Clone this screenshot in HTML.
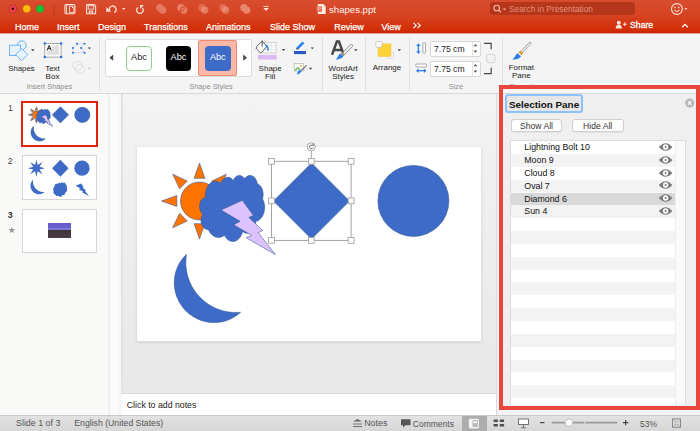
<!DOCTYPE html>
<html><head><meta charset="utf-8"><style>
html,body{margin:0;padding:0;width:700px;height:431px;overflow:hidden;background:#F3F3F3;font-family:'Liberation Sans', sans-serif}
.t{position:absolute;white-space:nowrap;font-family:'Liberation Sans', sans-serif}
svg text{font-family:'Liberation Sans', sans-serif}
</style></head><body>
<div style="position:absolute;left:0px;top:0px;width:700px;height:33px;background:linear-gradient(#D84D2F 0%,#D6421F 50%,#D22D07 92%,#C42500 100%)"></div><div style="position:absolute;left:0px;top:33px;width:700px;height:1px;background:#E2A596"></div><svg style="position:absolute;left:0px;top:0px;overflow:visible" width="60" height="20" viewBox="0 0 60 20">
<circle cx="12.8" cy="8.8" r="4" fill="#F2444F" stroke="#B5281F" stroke-width="0.7"/>
<circle cx="12.8" cy="8.8" r="1.3" fill="#2a0505"/>
<circle cx="26.7" cy="8.8" r="4" fill="#FFBE0B" stroke="#C0541A" stroke-width="0.5"/>
<circle cx="40" cy="8.8" r="4" fill="#0AC834" stroke="#A04A1A" stroke-width="0.5"/>
<line x1="54" y1="5" x2="54" y2="17" stroke="#B93A20" stroke-width="1"/>
</svg><svg style="position:absolute;left:0px;top:0px;overflow:visible" width="280" height="20" viewBox="0 0 280 20">
<rect x="64.9" y="4.6" width="10" height="9.2" rx="1.2" fill="none" stroke="#F9E0D8" stroke-width="1.1"/>
<rect x="66" y="5.3" width="0.9" height="8" fill="#F9E0D8"/>
<path d="M69.5 6.1 h2.8 l1.6 1.6 v4.9 h-4.4z" fill="none" stroke="#F9E0D8" stroke-width="0.9"/>
<path d="M72 5.9 l2 2 h-2z" fill="#F9E0D8"/>
<path d="M86.6 4.6 h7.6 l1.4 1.4 v7.8 h-9z" fill="none" stroke="#F9E0D8" stroke-width="1.1" stroke-linejoin="round"/>
<rect x="88.2" y="5.8" width="5.5" height="3.3" fill="none" stroke="#F9E0D8" stroke-width="0.9"/>
<path d="M88.8 13.6 v-3 h4.4 v3" fill="#F9E0D8"/>
<rect x="90.4" y="11.6" width="1.2" height="1.6" fill="#D04226"/>
<path d="M109.6 10.3 A3.3 3.3 0 1 1 114.1 12.4" fill="none" stroke="#F9E0D8" stroke-width="1.3"/>
<path d="M106.3 6.9 V11.8 H111.2z" fill="#F9E0D8"/>
<path d="M122.1 8 h3.4 l-1.7 1.9z" fill="#F9E0D8"/>
<path d="M137.9 7.4 A3.3 3.3 0 1 0 142.4 7.9" fill="none" stroke="#F9E0D8" stroke-width="1.3"/>
<path d="M140 4.9 H143.9 L140 8.9z" fill="#F9E0D8"/>
</svg><svg style="position:absolute;left:0px;top:0px;overflow:visible" width="280" height="20" viewBox="0 0 280 20"><g fill="#F4AE9B" opacity="0.5"><path d="M156.30,7.70 a3.7,3.7 0 1 0 7.4,0 a3.7,3.7 0 1 0 -7.4,0zM159.00,10.10 a3.7,3.7 0 1 0 7.4,0 a3.7,3.7 0 1 0 -7.4,0z" fill-rule="nonzero"/></g></svg><svg style="position:absolute;left:0px;top:0px;overflow:visible" width="280" height="20" viewBox="0 0 280 20"><g fill="#F4AE9B" opacity="0.55"><path d="M177.30,7.70 a3.7,3.7 0 1 0 7.4,0 a3.7,3.7 0 1 0 -7.4,0zM180.00,10.10 a3.7,3.7 0 1 0 7.4,0 a3.7,3.7 0 1 0 -7.4,0zM181.10,8.90 a1.3,1.3 0 1 0 2.6,0 a1.3,1.3 0 1 0 -2.6,0z" fill-rule="evenodd"/></g></svg><svg style="position:absolute;left:0px;top:0px;overflow:visible" width="280" height="20" viewBox="0 0 280 20"><g fill="#F4AE9B"><path d="M198.30,7.70 a3.7,3.7 0 1 0 7.4,0 a3.7,3.7 0 1 0 -7.4,0z" opacity="0.3"/><path d="M201.00,10.10 a3.7,3.7 0 1 0 7.4,0 a3.7,3.7 0 1 0 -7.4,0z" opacity="0.5"/></g></svg><svg style="position:absolute;left:0px;top:0px;overflow:visible" width="280" height="20" viewBox="0 0 280 20"><g fill="#F4AE9B"><path d="M219.30,7.70 a3.7,3.7 0 1 0 7.4,0 a3.7,3.7 0 1 0 -7.4,0z" opacity="0.35"/><path d="M222.00,10.10 a3.7,3.7 0 1 0 7.4,0 a3.7,3.7 0 1 0 -7.4,0z" opacity="0.5"/></g></svg><svg style="position:absolute;left:0px;top:0px;overflow:visible" width="280" height="20" viewBox="0 0 280 20"><g fill="#F4AE9B" opacity="0.62"><path d="M240.30,7.70 a3.7,3.7 0 1 0 7.4,0 a3.7,3.7 0 1 0 -7.4,0zM243.00,10.10 a3.7,3.7 0 1 0 7.4,0 a3.7,3.7 0 1 0 -7.4,0z" fill-rule="nonzero"/></g></svg><svg style="position:absolute;left:0px;top:0px;overflow:visible" width="280" height="20" viewBox="0 0 280 20"><rect x="263.4" y="5.9" width="5.3" height="1" fill="#F9E0D8"/><path d="M263.3 8 h5.5 l-2.75 3z" fill="#F9E0D8"/></svg><svg style="position:absolute;left:0px;top:0px;overflow:visible" width="330" height="20" viewBox="0 0 330 20"><path d="M317.8 4 h5.5 l2.4 2.4 v7.5 h-7.9z" fill="#F7EDE3"/>
<path d="M323.3 4 v2.4 h2.4z" fill="#D9D0C8"/>
<rect x="316.3" y="6.2" width="5.7" height="5.5" fill="#EA6A50"/>
<path d="M318.2 10.6 v-3.4 h1.3 a1 1 0 0 1 0 2 h-1.3" fill="none" stroke="#FFD9CF" stroke-width="0.7"/></svg><div class="t" style="left:329px;top:0.07px;font-size:9.6px;line-height:19.2px;color:#FFF3EE;font-weight:400;">shapes.ppt</div><div style="position:absolute;left:490px;top:2.1px;width:145px;height:13.2px;background:#B6361B;border-radius:3px"></div><svg style="position:absolute;left:490px;top:0px;overflow:visible" width="20" height="20" viewBox="0 0 20 20"><circle cx="6.7" cy="8" r="2.8" fill="none" stroke="#F2B8A8" stroke-width="1.1"/><line x1="8.7" y1="10.1" x2="10.7" y2="12.2" stroke="#F2B8A8" stroke-width="1.3"/><path d="M12.7 8.4 h3.4 l-1.7 1.9z" fill="#F2B8A8"/></svg><div class="t" style="left:509px;top:1.22px;font-size:8.3px;line-height:16.6px;color:#E2927F;font-weight:400;">Search in Presentation</div><svg style="position:absolute;left:660px;top:0px;overflow:visible" width="40" height="20" viewBox="0 0 40 20"><circle cx="16.9" cy="9" r="5.4" fill="none" stroke="#FBE7E1" stroke-width="1.1"/><circle cx="15" cy="7.6" r="0.8" fill="#FBE7E1"/><circle cx="18.8" cy="7.6" r="0.8" fill="#FBE7E1"/><path d="M14.2 10.2 q2.7 2.6 5.4 0" fill="none" stroke="#FBE7E1" stroke-width="1"/><path d="M24.3 8.2 h3.2 l-1.6 1.9z" fill="#FBE7E1"/></svg><div class="t" style="left:15px;top:18.08px;font-size:9px;line-height:18px;color:#FFFFFF;font-weight:400;-webkit-text-stroke:0.25px #fff;">Home</div><div class="t" style="left:57px;top:18.08px;font-size:9px;line-height:18px;color:#FFFFFF;font-weight:400;-webkit-text-stroke:0.25px #fff;">Insert</div><div class="t" style="left:98px;top:18.08px;font-size:9px;line-height:18px;color:#FFFFFF;font-weight:400;-webkit-text-stroke:0.25px #fff;">Design</div><div class="t" style="left:144px;top:18.08px;font-size:9px;line-height:18px;color:#FFFFFF;font-weight:400;-webkit-text-stroke:0.25px #fff;">Transitions</div><div class="t" style="left:206px;top:18.08px;font-size:9px;line-height:18px;color:#FFFFFF;font-weight:400;-webkit-text-stroke:0.25px #fff;">Animations</div><div class="t" style="left:270px;top:18.08px;font-size:9px;line-height:18px;color:#FFFFFF;font-weight:400;-webkit-text-stroke:0.25px #fff;">Slide Show</div><div class="t" style="left:334.3px;top:18.08px;font-size:9px;line-height:18px;color:#FFFFFF;font-weight:400;-webkit-text-stroke:0.25px #fff;">Review</div><div class="t" style="left:381.4px;top:18.08px;font-size:9px;line-height:18px;color:#FFFFFF;font-weight:400;-webkit-text-stroke:0.25px #fff;">View</div><svg style="position:absolute;left:400px;top:15px;overflow:visible" width="30" height="20" viewBox="0 0 30 20"><path d="M13.5 7.8 l2.8 2.6 l-2.8 2.6 M17.5 7.8 l2.8 2.6 l-2.8 2.6" fill="none" stroke="#fff" stroke-width="1.1"/></svg><svg style="position:absolute;left:610px;top:15px;overflow:visible" width="90" height="20" viewBox="0 0 90 20"><circle cx="8.8" cy="7.7" r="2" fill="#F8E4DE"/><path d="M5.6 13.6 q0.2 -3.8 3.2 -3.8 q3 0 3.2 3.8z" fill="#F8E4DE"/>
<path d="M12.9 9.2 h3.8 M14.8 7.3 v3.8" stroke="#F8E4DE" stroke-width="1.1"/>
<path d="M72.2 12.2 l2.8 -2.8 l2.8 2.8" fill="none" stroke="#fff" stroke-width="1.3"/></svg><div class="t" style="left:630px;top:16.69px;font-size:8.7px;line-height:17.4px;color:#FFFFFF;font-weight:400;-webkit-text-stroke:0.3px #fff;">Share</div><div style="position:absolute;left:0px;top:34px;width:700px;height:59px;background:#F4F4F4"></div><div style="position:absolute;left:0px;top:93px;width:700px;height:1px;background:#D9D9D9"></div><div style="position:absolute;left:99px;top:37px;width:1px;height:54px;background:#E0E0E0"></div><div style="position:absolute;left:322px;top:37px;width:1px;height:54px;background:#E0E0E0"></div><div style="position:absolute;left:365px;top:37px;width:1px;height:54px;background:#E0E0E0"></div><div style="position:absolute;left:409px;top:37px;width:1px;height:54px;background:#E0E0E0"></div><div style="position:absolute;left:502px;top:37px;width:1px;height:54px;background:#E0E0E0"></div><svg style="position:absolute;left:0px;top:0px;overflow:visible" width="700" height="100" viewBox="0 0 700 100">
<g stroke="#5AACF5" stroke-width="0.9" fill="#EAF4FD">
<circle cx="21.7" cy="45.3" r="4.5"/>
<rect x="9.6" y="45.2" width="11" height="10.2"/>
<path d="M21.7 48.6 l6 6 l-6 6 l-6 -6z"/>
</g>
<path d="M31 49.2 h3.6 l-1.8 2z" fill="#444"/>
<rect x="44.8" y="43.4" width="16.3" height="13.7" fill="#FAFAFA" stroke="#8a8a8a" stroke-width="0.7"/>
<rect x="47" y="45.3" width="12" height="9.6" fill="#E4E4E4"/>
<path d="M51.5 47.3 h7.5 M51.5 49.3 h7.5 M47 51.3 h12 M47 53.3 h12" stroke="#D6D6D6" stroke-width="0.5"/>
<rect x="46.6" y="45.1" width="5.2" height="5.6" fill="#FAFAFA"/>
<path d="M47.1 50.4 l2.1-5 l2.1 5 M47.9 48.7 h2.6" fill="none" stroke="#222" stroke-width="1"/>
<g fill="#1A73E8"><circle cx="44.8" cy="43.4" r="1.25"/><circle cx="61.1" cy="43.4" r="1.25"/><circle cx="44.8" cy="57.1" r="1.25"/><circle cx="61.1" cy="57.1" r="1.25"/></g>
<path d="M77.1 43.7 h7.4 l-3.3 4.3 l3.3 4.8 h-11.6 v-4.8z" fill="none" stroke="#CFCFCF" stroke-width="0.8"/>
<g fill="#1A73E8"><circle cx="77.1" cy="43.7" r="1.05"/><circle cx="84.5" cy="43.7" r="1.05"/><circle cx="81.2" cy="48" r="1.05"/><circle cx="84.5" cy="52.8" r="1.05"/><circle cx="72.9" cy="52.8" r="1.05"/><circle cx="72.9" cy="48" r="1.05"/></g>
<path d="M87.7 47.4 h3.4 l-1.7 1.9z" fill="#444"/>
<g fill="none" stroke="#DADADA" stroke-width="0.8"><circle cx="77.4" cy="66" r="4.6"/><circle cx="80" cy="69" r="4.6"/></g>
<path d="M87.7 67.8 h3.4 l-1.7 1.9z" fill="#C4C4C4"/>
</svg><div class="t" style="left:8.2px;top:60.90px;font-size:7.8px;line-height:15.6px;color:#1c1c1c;font-weight:400;">Shapes</div><div class="t" style="left:-147.5px;width:400px;text-align:center;top:60.63px;font-size:8px;line-height:16px;color:#1c1c1c;font-weight:400;">Text</div><div class="t" style="left:-147.5px;width:400px;text-align:center;top:68.53px;font-size:8px;line-height:16px;color:#1c1c1c;font-weight:400;">Box</div><div class="t" style="left:-150.5px;width:400px;text-align:center;top:79.54px;font-size:7.4px;line-height:14.8px;color:#8E8E8E;font-weight:400;">Insert Shapes</div><div style="position:absolute;left:105px;top:39px;width:146px;height:37px;background:#fff;border:1px solid #DCDCDC;border-radius:2px;box-sizing:border-box;width:147px;height:38px"></div><svg style="position:absolute;left:0px;top:0px;overflow:visible" width="700" height="100" viewBox="0 0 700 100"><path d="M113.2 54.6 v6.2 l-3.9 -3.1z" fill="#4A4A4A"/><path d="M243.2 54.6 v6.2 l3.9 -3.1z" fill="#4A4A4A"/></svg><div style="position:absolute;left:126.3px;top:45.6px;width:25.6px;height:25.2px;background:#fff;border:1px solid #8FD18A;border-radius:4px;box-sizing:border-box"></div><div style="position:absolute;left:165.6px;top:45.6px;width:25.8px;height:25.4px;background:#000;border-radius:4px"></div><div style="position:absolute;left:198.3px;top:39.9px;width:38.7px;height:36.5px;background:#F9B7A6;border:1px solid #EE8A72;box-sizing:border-box;border-radius:2px"></div><div style="position:absolute;left:205px;top:45.6px;width:25.7px;height:25.6px;background:#3E6BC8;border-radius:4px"></div><div class="t" style="left:-61px;width:400px;text-align:center;top:48.01px;font-size:9.2px;line-height:18.4px;color:#222;font-weight:400;">Abc</div><div class="t" style="left:-21.5px;width:400px;text-align:center;top:48.01px;font-size:9.2px;line-height:18.4px;color:#fff;font-weight:400;">Abc</div><div class="t" style="left:17.80000000000001px;width:400px;text-align:center;top:48.01px;font-size:9.2px;line-height:18.4px;color:#fff;font-weight:400;">Abc</div><div class="t" style="left:11px;width:400px;text-align:center;top:79.54px;font-size:7.4px;line-height:14.8px;color:#8E8E8E;font-weight:400;">Shape Styles</div><svg style="position:absolute;left:0px;top:0px;overflow:visible" width="700" height="100" viewBox="0 0 700 100">
<rect x="263" y="42.5" width="13" height="10.5" fill="#FBFBFB" stroke="#B9B9B9" stroke-width="0.6"/>
<path d="M263 46 h13 M263 49.5 h13 M267.3 42.5 v10.5 M271.6 42.5 v10.5" stroke="#DADADA" stroke-width="0.5"/>
<path d="M256.6 46.6 l4.6 -4.6 q0.8 -0.8 1.6 0 l4.2 4.2 l-5.4 6.2 q-0.8 0.8 -1.6 0 l-3.4 -3.4 q-0.8 -0.8 0 -1.6z" fill="#fff" stroke="#444" stroke-width="0.9" stroke-linejoin="round"/>
<path d="M262.2 46.8 l0 -6.4" stroke="#444" stroke-width="0.9"/>
<path d="M265.2 45 q3.6 1.4 2.6 5.6" fill="none" stroke="#2F80E6" stroke-width="1.5"/>
<rect x="258" y="55" width="18.6" height="4.5" fill="#DDB8F5"/>
<path d="M281.8 49 h3.4 l-1.7 1.9z" fill="#444"/>
<rect x="294" y="51" width="12" height="3.1" fill="#2A5BC5"/>
<path d="M296.3 49.6 l0.6 -2.6 l5.6 -5.6 l1.9 1.9 l-5.6 5.6z" fill="#2F86E8"/>
<path d="M296.3 49.6 l0.6 -2.6 l2 2z" fill="#555"/>
<path d="M310.6 47.4 h3.4 l-1.7 1.9z" fill="#444"/>
<rect x="294.2" y="63.3" width="9.3" height="7.7" fill="#FBFBFB" stroke="#A8A8A8" stroke-width="0.6"/>
<circle cx="301" cy="65.8" r="1.1" fill="#F5C33B"/>
<path d="M295 70.5 l2.8 -2.8 l2.2 2" fill="none" stroke="#66C05C" stroke-width="1.3"/>
<path d="M306.3 65.6 l-4.8 4.6" stroke="#777" stroke-width="1.3" stroke-linecap="round"/>
<path d="M297 74.6 q0.2 -2.8 2.6 -5 l2 2 q-2 2.6 -4.6 3z" fill="#2F80E6"/>
<path d="M308.8 67.8 h3.4 l-1.7 1.9z" fill="#444"/>
<path d="M332 54.8 l4.9 -13.4 h2 l4.9 13.4 M334.2 50 h7.6" fill="none" stroke="#474747" stroke-width="2.5"/>
<path d="M351.4 45.6 l-8.4 8.8" stroke="#8A8A8A" stroke-width="3.2" stroke-linecap="round"/>
<path d="M351.4 45.6 l-8.4 8.8" stroke="#F7F7F7" stroke-width="1.8" stroke-linecap="round"/>
<path d="M340.6 53 l2.2 -1 l1.6 1.6 l-1 2.4 z" fill="#A58A7A"/>
<path d="M340.2 53.6 l3.2 3 q-2.4 3 -8.1 2.8 q1.9 -1.1 2.7 -3 q0.9 -2.2 2.2 -2.8z" fill="#2F7FE0"/>
<path d="M354.1 49.3 h3.4 l-1.7 1.9z" fill="#444"/>
<rect x="386.7" y="51.9" width="6.9" height="6.2" rx="1" fill="#fff" stroke="#BDBDBD" stroke-width="0.6"/>
<rect x="378.1" y="43.9" width="12.9" height="12.5" fill="#FFD43B" stroke="#F3B92A" stroke-width="0.5"/>
<rect x="375.9" y="41.6" width="6.2" height="5.7" rx="1" fill="#fff" stroke="#A8A8A8" stroke-width="0.6"/>
<path d="M397.6 49.3 h3.4 l-1.7 1.9z" fill="#444"/>
</svg><div class="t" style="left:70.19999999999999px;width:400px;text-align:center;top:60.63px;font-size:8px;line-height:16px;color:#1c1c1c;font-weight:400;">Shape</div><div class="t" style="left:70.19999999999999px;width:400px;text-align:center;top:68.53px;font-size:8px;line-height:16px;color:#1c1c1c;font-weight:400;">Fill</div><div class="t" style="left:143.2px;width:400px;text-align:center;top:60.63px;font-size:8px;line-height:16px;color:#1c1c1c;font-weight:400;">WordArt</div><div class="t" style="left:143.2px;width:400px;text-align:center;top:68.53px;font-size:8px;line-height:16px;color:#1c1c1c;font-weight:400;">Styles</div><div class="t" style="left:187px;width:400px;text-align:center;top:59.93px;font-size:8px;line-height:16px;color:#1c1c1c;font-weight:400;">Arrange</div><svg style="position:absolute;left:0px;top:0px;overflow:visible" width="700" height="100" viewBox="0 0 700 100">
<path d="M418.4 44.8 v7.6" stroke="#2F80E6" stroke-width="1.3"/>
<path d="M416.2 45.9 l2.2 -2.6 l2.2 2.6z M416.2 51.3 l2.2 2.6 l2.2 -2.6z" fill="#2F80E6"/>
<rect x="422.9" y="42.8" width="2.6" height="10.2" rx="0.5" fill="#fff" stroke="#8A8A8A" stroke-width="0.7"/>
<rect x="415.9" y="64" width="10.6" height="3" rx="0.5" fill="#fff" stroke="#8A8A8A" stroke-width="0.7"/>
<path d="M417.5 70.7 h7.5" stroke="#2F80E6" stroke-width="1.3"/>
<path d="M418.6 68.5 l-2.6 2.2 l2.6 2.2z M423.9 68.5 l2.6 2.2 l-2.6 2.2z" fill="#2F80E6"/>
<path d="M484 43.4 h7.2 v5.8 M484 73.6 h7.2 v-5.8" fill="none" stroke="#484848" stroke-width="1.2"/>
<rect x="486.6" y="54.4" width="8.5" height="8.3" rx="2" fill="#F1F1F1" stroke="#C6C6C6" stroke-width="0.7"/>
</svg><div style="position:absolute;left:430px;top:40.7px;width:51.4px;height:16px;background:#fff;border:1px solid #D6D6D6;border-radius:2px;box-sizing:border-box"></div><div style="position:absolute;left:430px;top:60.8px;width:51.4px;height:16px;background:#fff;border:1px solid #D6D6D6;border-radius:2px;box-sizing:border-box"></div><div style="position:absolute;left:471.5px;top:42px;width:1px;height:13.5px;background:#E4E4E4"></div><div style="position:absolute;left:471.5px;top:62px;width:1px;height:13.5px;background:#E4E4E4"></div><svg style="position:absolute;left:470px;top:33px;overflow:visible" width="14" height="60" viewBox="0 0 14 60"><path d="M3.4 13.2 l2-2.2 l2 2.2z M3.4 17.6 l2 2.2 l2-2.2z M3.4 33.2 l2-2.2 l2 2.2z M3.4 37.6 l2 2.2 l2-2.2z" fill="#555"/></svg><div class="t" style="left:434px;top:40.62px;font-size:8.6px;line-height:17.2px;color:#222;font-weight:400;">7.75 cm</div><div class="t" style="left:434px;top:60.72px;font-size:8.6px;line-height:17.2px;color:#222;font-weight:400;">7.75 cm</div><div class="t" style="left:256px;width:400px;text-align:center;top:79.54px;font-size:7.4px;line-height:14.8px;color:#8E8E8E;font-weight:400;">Size</div><svg style="position:absolute;left:0px;top:0px;overflow:visible" width="700" height="100" viewBox="0 0 700 100">
<path d="M530.2 43.2 l-8.4 8.6" stroke="#8E8E8E" stroke-width="2.6" stroke-linecap="round"/>
<path d="M530.2 43.2 l-8.4 8.6" stroke="#F4F4F4" stroke-width="1.4" stroke-linecap="round"/>
<path d="M518.3 52.2 l2.4 -1.8 l2.6 2.6 l-1.8 2.4 z" fill="#D9A441"/>
<path d="M517.6 53.2 l3.4 3.4 q-2.6 3.4 -8.8 2.8 q2 -1.2 3 -3.4 q0.9 -2.2 2.4 -2.8z" fill="#2F7FE0"/>
</svg><div class="t" style="left:321.29999999999995px;width:400px;text-align:center;top:60.43px;font-size:8px;line-height:16px;color:#1c1c1c;font-weight:400;">Format</div><div class="t" style="left:321.29999999999995px;width:400px;text-align:center;top:68.33px;font-size:8px;line-height:16px;color:#1c1c1c;font-weight:400;">Pane</div><div class="t" style="left:321.29999999999995px;width:400px;text-align:center;top:80.04px;font-size:7.4px;line-height:14.8px;color:#8E8E8E;font-weight:400;">Format</div><div style="position:absolute;left:0px;top:94px;width:122px;height:321px;background:#F9F9F8"></div><div style="position:absolute;left:108px;top:94px;width:3px;height:321px;background:linear-gradient(90deg,#F2F2F2,#EDEDED 50%,#F7F7F7)"></div><div style="position:absolute;left:110px;top:94px;width:8px;height:321px;background:#FBFBFB"></div><div style="position:absolute;left:118px;top:94px;width:3px;height:321px;background:#F6F6F6"></div><div style="position:absolute;left:121px;top:94px;width:2px;height:300px;background:#E2E2E2"></div><div class="t" style="left:7.9px;top:99.55px;font-size:8.8px;line-height:17.6px;color:#444;font-weight:400;">1</div><div style="position:absolute;left:20.7px;top:100.8px;width:77.8px;height:46.2px;border:2px solid #E0250D;box-sizing:border-box;background:#fff"></div><svg style="position:absolute;left:22.7px;top:102.8px;overflow:visible" width="73.8" height="42.2" viewBox="137 147 344 194"><path d="M199.50,163.00 L194.05,178.33 L204.95,178.33Z M226.37,174.13 L211.67,181.12 L219.38,188.83Z M237.50,201.00 L222.17,195.55 L222.17,206.45Z M226.37,227.87 L219.38,213.17 L211.67,220.88Z M199.50,239.00 L204.95,223.67 L194.05,223.67Z M172.63,227.87 L187.33,220.88 L179.62,213.17Z M161.50,201.00 L176.83,206.45 L176.83,195.55Z M172.63,174.13 L179.62,188.83 L187.33,181.12Z " fill="#FF7300" stroke="#2F528F" stroke-width="2.4" stroke-linejoin="round"/><ellipse cx="199.5" cy="201.0" rx="19.0" ry="19.0" fill="#FF7300" stroke="#2F528F" stroke-width="2.4"/><path d="M311.5,163 L349.5,201 L311.5,239 L273.5,201Z" fill="#3F6BC8" stroke="#2F528F" stroke-width="2.4"/><circle cx="413.4" cy="200.9" r="35.5" fill="#3F6BC8" stroke="#2F528F" stroke-width="2.4"/><path d="M205.47,197.15 L205.38,195.59 L205.42,194.02 L205.58,192.47 L205.87,190.95 L206.27,189.49 L206.80,188.10 L207.43,186.79 L208.17,185.60 L208.99,184.52 L209.90,183.58 L210.88,182.78 L211.91,182.14 L213.00,181.67 L214.11,181.36 L215.24,181.23 L216.38,181.27 L217.50,181.49 L218.60,181.88 L219.66,182.43 L220.67,183.15 L221.23,181.89 L221.91,180.76 L222.69,179.75 L223.56,178.90 L224.50,178.21 L225.50,177.70 L226.54,177.38 L227.60,177.26 L228.67,177.32 L229.71,177.59 L230.73,178.04 L231.69,178.68 L232.58,179.48 L233.39,180.44 L233.81,179.45 L234.31,178.54 L234.90,177.72 L235.55,177.01 L236.26,176.42 L237.03,175.96 L237.82,175.64 L238.65,175.46 L239.48,175.42 L240.31,175.53 L241.12,175.78 L241.90,176.18 L242.64,176.70 L243.32,177.36 L243.94,178.12 L244.49,178.99 L245.09,178.12 L245.76,177.36 L246.49,176.72 L247.27,176.19 L248.09,175.80 L248.94,175.55 L249.81,175.44 L250.68,175.46 L251.54,175.64 L252.37,175.95 L253.18,176.39 L253.94,176.97 L254.65,177.66 L255.29,178.47 L255.86,179.37 L256.35,180.37 L256.75,181.43 L257.05,182.55 L257.25,183.72 L257.98,184.04 L258.68,184.46 L259.35,184.97 L259.98,185.57 L260.56,186.24 L261.10,186.99 L261.58,187.80 L262.01,188.68 L262.37,189.61 L262.67,190.58 L262.90,191.58 L263.06,192.62 L263.15,193.66 L263.17,194.72 L263.11,195.77 L262.99,196.81 L262.79,197.83 L262.52,198.82 L263.10,199.97 L263.59,201.19 L263.99,202.47 L264.29,203.80 L264.50,205.17 L264.61,206.56 L264.62,207.96 L264.53,209.35 L264.34,210.72 L264.06,212.06 L263.67,213.35 L263.20,214.59 L262.64,215.75 L262.00,216.84 L261.29,217.83 L260.51,218.71 L259.67,219.49 L258.78,220.15 L257.84,220.68 L256.87,221.08 L255.88,221.34 L255.82,222.68 L255.65,224.00 L255.37,225.29 L255.00,226.52 L254.52,227.69 L253.96,228.78 L253.31,229.78 L252.58,230.67 L251.79,231.44 L250.93,232.09 L250.04,232.60 L249.10,232.97 L248.15,233.19 L247.18,233.27 L246.21,233.19 L245.25,232.97 L244.32,232.60 L243.42,232.09 L242.57,231.44 L242.15,233.01 L241.60,234.50 L240.93,235.89 L240.14,237.16 L239.25,238.29 L238.27,239.26 L237.21,240.07 L236.10,240.70 L234.93,241.14 L233.74,241.39 L232.53,241.43 L231.33,241.28 L230.15,240.94 L229.01,240.40 L227.92,239.68 L226.90,238.78 L225.96,237.72 L225.13,236.52 L224.40,235.19 L223.03,236.16 L221.58,236.88 L220.07,237.32 L218.54,237.49 L217.00,237.37 L215.49,236.97 L214.03,236.30 L212.64,235.36 L211.36,234.18 L210.20,232.77 L209.19,231.17 L208.33,229.39 L207.67,229.45 L207.00,229.42 L206.34,229.29 L205.69,229.07 L205.07,228.77 L204.46,228.37 L203.89,227.90 L203.36,227.35 L202.87,226.72 L202.43,226.03 L202.04,225.28 L201.71,224.49 L201.44,223.65 L201.24,222.77 L201.10,221.87 L201.02,220.96 L201.01,220.04 L201.08,219.13 L201.20,218.23 L201.40,217.35 L201.65,216.50 L201.97,215.69 L202.35,214.93 L202.78,214.23 L202.23,213.73 L201.72,213.16 L201.26,212.52 L200.84,211.82 L200.47,211.06 L200.17,210.25 L199.92,209.41 L199.73,208.54 L199.61,207.64 L199.55,206.73 L199.56,205.82 L199.63,204.92 L199.77,204.03 L199.97,203.16 L200.24,202.33 L200.56,201.53 L200.94,200.79 L201.37,200.10 L201.85,199.48 L202.37,198.92 L202.93,198.44 L203.51,198.04 L204.13,197.73 L204.77,197.50 L205.41,197.36Z" fill="#3F6BC8" stroke="#2F528F" stroke-width="2.4"/><path d="M240.61,312.21 L239.08,313.56 L237.49,314.84 L235.82,316.02 L234.10,317.12 L232.32,318.12 L230.49,319.03 L228.61,319.84 L226.69,320.55 L224.73,321.16 L222.75,321.66 L220.74,322.06 L218.71,322.35 L216.66,322.54 L214.61,322.61 L212.55,322.58 L210.50,322.45 L208.45,322.20 L206.42,321.85 L204.41,321.39 L202.42,320.83 L200.46,320.16 L198.54,319.40 L196.66,318.53 L194.83,317.57 L193.05,316.52 L191.32,315.37 L189.66,314.14 L188.06,312.82 L186.53,311.42 L185.08,309.94 L183.70,308.39 L182.40,306.77 L181.19,305.09 L180.07,303.35 L179.04,301.55 L178.11,299.70 L177.27,297.81 L176.53,295.88 L175.90,293.91 L175.36,291.92 L174.93,289.90 L174.61,287.86 L174.39,285.81 L174.29,283.75 L174.28,281.69 L174.39,279.64 L174.60,277.59 L174.93,275.57 L175.35,273.56 L175.88,271.58 L176.52,269.63 L177.25,267.72 L178.09,265.85 L179.02,264.03 L180.05,262.26 L181.17,260.55 L182.37,258.90 L183.67,257.32 L185.04,255.81 L186.50,254.38 L186.17,256.63 L185.95,258.89 L185.83,261.17 L185.82,263.45 L185.91,265.72 L186.11,268.00 L186.41,270.26 L186.82,272.51 L187.33,274.73 L187.95,276.94 L188.66,279.11 L189.48,281.25 L190.39,283.35 L191.40,285.41 L192.50,287.42 L193.69,289.38 L194.97,291.29 L196.34,293.13 L197.79,294.91 L199.31,296.62 L200.92,298.26 L202.60,299.82 L204.35,301.31 L206.16,302.71 L208.04,304.03 L209.97,305.26 L211.96,306.41 L214.00,307.45 L216.08,308.41 L218.20,309.27 L220.36,310.02 L222.55,310.68 L224.76,311.24 L227.00,311.69 L229.25,312.04 L231.52,312.29 L233.79,312.42 L236.07,312.46 L238.34,312.39 L240.61,312.21Z" fill="#3F6BC8" stroke="#2F528F" stroke-width="2.4"/><path d="M242.34,200.30 L253.39,215.58 L248.83,217.39 L262.75,230.48 L258.19,232.67 L275.40,254.60 L246.22,237.79 L251.78,235.46 L233.65,224.70 L240.15,221.37 L221.00,210.08Z" fill="#DCC3FF" stroke="#2F528F" stroke-width="2.4" stroke-linejoin="miter"/></svg><div class="t" style="left:7.7px;top:153.15px;font-size:8.8px;line-height:17.6px;color:#444;font-weight:400;">2</div><div style="position:absolute;left:22px;top:155px;width:75px;height:44.6px;border:1px solid #D6D6D6;box-sizing:border-box;background:#fff"></div><svg style="position:absolute;left:23px;top:156px;overflow:visible" width="73" height="42.6" viewBox="137 147 344 194"><path d="M200.00,160.00 L206.12,186.22 L228.99,172.01 L214.78,194.88 L241.00,201.00 L214.78,207.12 L228.99,229.99 L206.12,215.78 L200.00,242.00 L193.88,215.78 L171.01,229.99 L185.22,207.12 L159.00,201.00 L185.22,194.88 L171.01,172.01 L193.88,186.22Z" fill="#3F6BC8"/><circle cx="200" cy="201" r="14" fill="#3F6BC8"/><path d="M313,161 L352,201 L313,241 L274,201Z" fill="#3F6BC8"/><circle cx="415" cy="201" r="36" fill="#3F6BC8"/><path d="M238.61,313.21 L237.08,314.56 L235.49,315.84 L233.82,317.02 L232.10,318.12 L230.32,319.12 L228.49,320.03 L226.61,320.84 L224.69,321.55 L222.73,322.16 L220.75,322.66 L218.74,323.06 L216.71,323.35 L214.66,323.54 L212.61,323.61 L210.55,323.58 L208.50,323.45 L206.45,323.20 L204.42,322.85 L202.41,322.39 L200.42,321.83 L198.46,321.16 L196.54,320.40 L194.66,319.53 L192.83,318.57 L191.05,317.52 L189.32,316.37 L187.66,315.14 L186.06,313.82 L184.53,312.42 L183.08,310.94 L181.70,309.39 L180.40,307.77 L179.19,306.09 L178.07,304.35 L177.04,302.55 L176.11,300.70 L175.27,298.81 L174.53,296.88 L173.90,294.91 L173.36,292.92 L172.93,290.90 L172.61,288.86 L172.39,286.81 L172.29,284.75 L172.28,282.69 L172.39,280.64 L172.60,278.59 L172.93,276.57 L173.35,274.56 L173.88,272.58 L174.52,270.63 L175.25,268.72 L176.09,266.85 L177.02,265.03 L178.05,263.26 L179.17,261.55 L180.37,259.90 L181.67,258.32 L183.04,256.81 L184.50,255.38 L184.17,257.63 L183.95,259.89 L183.83,262.17 L183.82,264.45 L183.91,266.72 L184.11,269.00 L184.41,271.26 L184.82,273.51 L185.33,275.73 L185.95,277.94 L186.66,280.11 L187.48,282.25 L188.39,284.35 L189.40,286.41 L190.50,288.42 L191.69,290.38 L192.97,292.29 L194.34,294.13 L195.79,295.91 L197.31,297.62 L198.92,299.26 L200.60,300.82 L202.35,302.31 L204.16,303.71 L206.04,305.03 L207.97,306.26 L209.96,307.41 L212.00,308.45 L214.08,309.41 L216.20,310.27 L218.36,311.02 L220.55,311.68 L222.76,312.24 L225.00,312.69 L227.25,313.04 L229.52,313.29 L231.79,313.42 L234.07,313.46 L236.34,313.39 L238.61,313.21Z" fill="#3F6BC8"/><path d="M284.96,290.62 L284.87,289.01 L284.90,287.39 L285.07,285.79 L285.36,284.23 L285.78,282.72 L286.31,281.29 L286.95,279.95 L287.70,278.71 L288.54,277.60 L289.46,276.63 L290.45,275.81 L291.50,275.15 L292.60,274.66 L293.73,274.35 L294.88,274.21 L296.03,274.25 L297.18,274.48 L298.29,274.88 L299.37,275.45 L300.40,276.19 L300.97,274.90 L301.65,273.72 L302.44,272.69 L303.33,271.81 L304.28,271.10 L305.30,270.58 L306.35,270.25 L307.43,270.12 L308.51,270.19 L309.58,270.46 L310.61,270.93 L311.58,271.58 L312.49,272.41 L313.31,273.40 L313.73,272.38 L314.24,271.44 L314.84,270.59 L315.50,269.86 L316.23,269.26 L317.00,268.78 L317.81,268.45 L318.65,268.26 L319.49,268.23 L320.33,268.34 L321.15,268.60 L321.95,269.01 L322.70,269.55 L323.39,270.22 L324.02,271.01 L324.58,271.91 L325.19,271.01 L325.87,270.23 L326.61,269.56 L327.40,269.02 L328.24,268.62 L329.10,268.36 L329.98,268.24 L330.86,268.27 L331.73,268.45 L332.59,268.77 L333.41,269.23 L334.18,269.82 L334.90,270.54 L335.55,271.37 L336.13,272.30 L336.62,273.32 L337.03,274.42 L337.33,275.58 L337.54,276.78 L338.28,277.11 L338.99,277.54 L339.67,278.07 L340.30,278.68 L340.90,279.38 L341.45,280.15 L341.94,280.99 L342.37,281.89 L342.74,282.84 L343.04,283.84 L343.27,284.88 L343.44,285.94 L343.53,287.02 L343.55,288.11 L343.49,289.19 L343.36,290.27 L343.16,291.32 L342.89,292.33 L343.47,293.52 L343.97,294.78 L344.38,296.10 L344.69,297.47 L344.90,298.88 L345.01,300.31 L345.02,301.75 L344.93,303.18 L344.74,304.60 L344.45,305.98 L344.06,307.31 L343.58,308.58 L343.01,309.78 L342.36,310.90 L341.64,311.92 L340.85,312.83 L339.99,313.63 L339.09,314.31 L338.14,314.85 L337.15,315.27 L336.15,315.54 L336.08,316.92 L335.91,318.28 L335.63,319.61 L335.25,320.88 L334.77,322.08 L334.19,323.21 L333.53,324.23 L332.79,325.15 L331.99,325.95 L331.12,326.61 L330.21,327.14 L329.26,327.52 L328.29,327.75 L327.31,327.83 L326.32,327.75 L325.35,327.52 L324.40,327.14 L323.49,326.61 L322.63,325.95 L322.20,327.56 L321.65,329.10 L320.96,330.53 L320.16,331.84 L319.26,333.00 L318.27,334.00 L317.19,334.84 L316.06,335.48 L314.88,335.94 L313.66,336.19 L312.44,336.24 L311.22,336.09 L310.02,335.73 L308.86,335.17 L307.75,334.43 L306.72,333.51 L305.77,332.42 L304.92,331.18 L304.18,329.80 L302.79,330.81 L301.32,331.55 L299.79,332.01 L298.23,332.18 L296.67,332.05 L295.13,331.64 L293.65,330.95 L292.24,329.98 L290.94,328.77 L289.76,327.32 L288.73,325.66 L287.87,323.83 L287.19,323.89 L286.52,323.86 L285.85,323.73 L285.19,323.51 L284.55,323.19 L283.94,322.79 L283.36,322.30 L282.82,321.73 L282.32,321.08 L281.88,320.37 L281.48,319.60 L281.15,318.78 L280.87,317.91 L280.66,317.01 L280.52,316.09 L280.44,315.15 L280.44,314.20 L280.50,313.26 L280.63,312.33 L280.83,311.42 L281.09,310.55 L281.41,309.72 L281.79,308.94 L282.23,308.21 L281.67,307.70 L281.15,307.11 L280.68,306.45 L280.26,305.72 L279.89,304.94 L279.57,304.12 L279.32,303.25 L279.13,302.35 L279.01,301.42 L278.95,300.49 L278.96,299.55 L279.03,298.62 L279.17,297.70 L279.38,296.81 L279.65,295.95 L279.98,295.13 L280.36,294.36 L280.80,293.66 L281.28,293.01 L281.81,292.44 L282.38,291.95 L282.98,291.53 L283.60,291.21 L284.24,290.97 L284.90,290.83Z" fill="#3F6BC8"/><path d="M410.10,273.00 L423.10,289.89 L417.74,291.88 L434.12,306.35 L428.75,308.77 L449.00,333.00 L414.67,314.43 L421.21,311.85 L399.88,299.96 L407.52,296.28 L385.00,283.81Z" fill="#3F6BC8"/></svg><div class="t" style="left:7.7px;top:207.15px;font-size:8.8px;line-height:17.6px;color:#333;font-weight:700;">3</div><svg style="position:absolute;left:0px;top:220px;overflow:visible" width="20" height="20" viewBox="0 0 20 20"><path d="M11.8 6.8 l0.9 2.2 l2.4 0.2 l-1.8 1.5 l0.6 2.3 l-2.1 -1.3 l-2.1 1.3 l0.6 -2.3 l-1.8 -1.5 l2.4 -0.2z" fill="#9a9a9a"/></svg><div style="position:absolute;left:22px;top:209px;width:75px;height:44px;border:1px solid #D6D6D6;box-sizing:border-box;background:#fff"></div><div style="position:absolute;left:47.7px;top:223.3px;width:23.2px;height:15.2px;background:linear-gradient(#6458CC 0%,#6A5ECF 30%,#8F88DA 40%,#6C62C8 46%,#3C3438 49%,#4A3C48 100%)"></div><div style="position:absolute;left:123px;top:94px;width:373px;height:300px;background:linear-gradient(#F3F3F3,#E8E8E8)"></div><div style="position:absolute;left:496px;top:94px;width:1px;height:321px;background:#DADADA"></div><div style="position:absolute;left:497px;top:94px;width:203px;height:321px;background:#F3F3F3"></div><div style="position:absolute;left:137px;top:147px;width:344px;height:194px;background:#fff;box-shadow:0 1px 4px rgba(0,0,0,0.13)"></div><svg style="position:absolute;left:0px;top:0px;overflow:visible" width="700" height="431" viewBox="0 0 700 431"><path d="M199.50,163.00 L194.05,178.33 L204.95,178.33Z M226.37,174.13 L211.67,181.12 L219.38,188.83Z M237.50,201.00 L222.17,195.55 L222.17,206.45Z M226.37,227.87 L219.38,213.17 L211.67,220.88Z M199.50,239.00 L204.95,223.67 L194.05,223.67Z M172.63,227.87 L187.33,220.88 L179.62,213.17Z M161.50,201.00 L176.83,206.45 L176.83,195.55Z M172.63,174.13 L179.62,188.83 L187.33,181.12Z " fill="#FF7300" stroke="#2F528F" stroke-width="0.55" stroke-linejoin="round"/><ellipse cx="199.5" cy="201.0" rx="19.0" ry="19.0" fill="#FF7300" stroke="#2F528F" stroke-width="0.55"/><path d="M311.5,163 L349.5,201 L311.5,239 L273.5,201Z" fill="#3F6BC8" stroke="#2F528F" stroke-width="0.55"/><circle cx="413.4" cy="200.9" r="35.5" fill="#3F6BC8" stroke="#2F528F" stroke-width="0.55"/><path d="M205.47,197.15 L205.38,195.59 L205.42,194.02 L205.58,192.47 L205.87,190.95 L206.27,189.49 L206.80,188.10 L207.43,186.79 L208.17,185.60 L208.99,184.52 L209.90,183.58 L210.88,182.78 L211.91,182.14 L213.00,181.67 L214.11,181.36 L215.24,181.23 L216.38,181.27 L217.50,181.49 L218.60,181.88 L219.66,182.43 L220.67,183.15 L221.23,181.89 L221.91,180.76 L222.69,179.75 L223.56,178.90 L224.50,178.21 L225.50,177.70 L226.54,177.38 L227.60,177.26 L228.67,177.32 L229.71,177.59 L230.73,178.04 L231.69,178.68 L232.58,179.48 L233.39,180.44 L233.81,179.45 L234.31,178.54 L234.90,177.72 L235.55,177.01 L236.26,176.42 L237.03,175.96 L237.82,175.64 L238.65,175.46 L239.48,175.42 L240.31,175.53 L241.12,175.78 L241.90,176.18 L242.64,176.70 L243.32,177.36 L243.94,178.12 L244.49,178.99 L245.09,178.12 L245.76,177.36 L246.49,176.72 L247.27,176.19 L248.09,175.80 L248.94,175.55 L249.81,175.44 L250.68,175.46 L251.54,175.64 L252.37,175.95 L253.18,176.39 L253.94,176.97 L254.65,177.66 L255.29,178.47 L255.86,179.37 L256.35,180.37 L256.75,181.43 L257.05,182.55 L257.25,183.72 L257.98,184.04 L258.68,184.46 L259.35,184.97 L259.98,185.57 L260.56,186.24 L261.10,186.99 L261.58,187.80 L262.01,188.68 L262.37,189.61 L262.67,190.58 L262.90,191.58 L263.06,192.62 L263.15,193.66 L263.17,194.72 L263.11,195.77 L262.99,196.81 L262.79,197.83 L262.52,198.82 L263.10,199.97 L263.59,201.19 L263.99,202.47 L264.29,203.80 L264.50,205.17 L264.61,206.56 L264.62,207.96 L264.53,209.35 L264.34,210.72 L264.06,212.06 L263.67,213.35 L263.20,214.59 L262.64,215.75 L262.00,216.84 L261.29,217.83 L260.51,218.71 L259.67,219.49 L258.78,220.15 L257.84,220.68 L256.87,221.08 L255.88,221.34 L255.82,222.68 L255.65,224.00 L255.37,225.29 L255.00,226.52 L254.52,227.69 L253.96,228.78 L253.31,229.78 L252.58,230.67 L251.79,231.44 L250.93,232.09 L250.04,232.60 L249.10,232.97 L248.15,233.19 L247.18,233.27 L246.21,233.19 L245.25,232.97 L244.32,232.60 L243.42,232.09 L242.57,231.44 L242.15,233.01 L241.60,234.50 L240.93,235.89 L240.14,237.16 L239.25,238.29 L238.27,239.26 L237.21,240.07 L236.10,240.70 L234.93,241.14 L233.74,241.39 L232.53,241.43 L231.33,241.28 L230.15,240.94 L229.01,240.40 L227.92,239.68 L226.90,238.78 L225.96,237.72 L225.13,236.52 L224.40,235.19 L223.03,236.16 L221.58,236.88 L220.07,237.32 L218.54,237.49 L217.00,237.37 L215.49,236.97 L214.03,236.30 L212.64,235.36 L211.36,234.18 L210.20,232.77 L209.19,231.17 L208.33,229.39 L207.67,229.45 L207.00,229.42 L206.34,229.29 L205.69,229.07 L205.07,228.77 L204.46,228.37 L203.89,227.90 L203.36,227.35 L202.87,226.72 L202.43,226.03 L202.04,225.28 L201.71,224.49 L201.44,223.65 L201.24,222.77 L201.10,221.87 L201.02,220.96 L201.01,220.04 L201.08,219.13 L201.20,218.23 L201.40,217.35 L201.65,216.50 L201.97,215.69 L202.35,214.93 L202.78,214.23 L202.23,213.73 L201.72,213.16 L201.26,212.52 L200.84,211.82 L200.47,211.06 L200.17,210.25 L199.92,209.41 L199.73,208.54 L199.61,207.64 L199.55,206.73 L199.56,205.82 L199.63,204.92 L199.77,204.03 L199.97,203.16 L200.24,202.33 L200.56,201.53 L200.94,200.79 L201.37,200.10 L201.85,199.48 L202.37,198.92 L202.93,198.44 L203.51,198.04 L204.13,197.73 L204.77,197.50 L205.41,197.36Z" fill="#3F6BC8" stroke="#2F528F" stroke-width="0.55"/><path d="M240.61,312.21 L239.08,313.56 L237.49,314.84 L235.82,316.02 L234.10,317.12 L232.32,318.12 L230.49,319.03 L228.61,319.84 L226.69,320.55 L224.73,321.16 L222.75,321.66 L220.74,322.06 L218.71,322.35 L216.66,322.54 L214.61,322.61 L212.55,322.58 L210.50,322.45 L208.45,322.20 L206.42,321.85 L204.41,321.39 L202.42,320.83 L200.46,320.16 L198.54,319.40 L196.66,318.53 L194.83,317.57 L193.05,316.52 L191.32,315.37 L189.66,314.14 L188.06,312.82 L186.53,311.42 L185.08,309.94 L183.70,308.39 L182.40,306.77 L181.19,305.09 L180.07,303.35 L179.04,301.55 L178.11,299.70 L177.27,297.81 L176.53,295.88 L175.90,293.91 L175.36,291.92 L174.93,289.90 L174.61,287.86 L174.39,285.81 L174.29,283.75 L174.28,281.69 L174.39,279.64 L174.60,277.59 L174.93,275.57 L175.35,273.56 L175.88,271.58 L176.52,269.63 L177.25,267.72 L178.09,265.85 L179.02,264.03 L180.05,262.26 L181.17,260.55 L182.37,258.90 L183.67,257.32 L185.04,255.81 L186.50,254.38 L186.17,256.63 L185.95,258.89 L185.83,261.17 L185.82,263.45 L185.91,265.72 L186.11,268.00 L186.41,270.26 L186.82,272.51 L187.33,274.73 L187.95,276.94 L188.66,279.11 L189.48,281.25 L190.39,283.35 L191.40,285.41 L192.50,287.42 L193.69,289.38 L194.97,291.29 L196.34,293.13 L197.79,294.91 L199.31,296.62 L200.92,298.26 L202.60,299.82 L204.35,301.31 L206.16,302.71 L208.04,304.03 L209.97,305.26 L211.96,306.41 L214.00,307.45 L216.08,308.41 L218.20,309.27 L220.36,310.02 L222.55,310.68 L224.76,311.24 L227.00,311.69 L229.25,312.04 L231.52,312.29 L233.79,312.42 L236.07,312.46 L238.34,312.39 L240.61,312.21Z" fill="#3F6BC8" stroke="#2F528F" stroke-width="0.55"/><path d="M242.34,200.30 L253.39,215.58 L248.83,217.39 L262.75,230.48 L258.19,232.67 L275.40,254.60 L246.22,237.79 L251.78,235.46 L233.65,224.70 L240.15,221.37 L221.00,210.08Z" fill="#DCC3FF" stroke="#2F528F" stroke-width="0.55" stroke-linejoin="miter"/><rect x="271.5" y="161.3" width="79.6" height="79.1" fill="none" stroke="#9A9A9A" stroke-width="0.9"/><line x1="311.3" y1="150.8" x2="311.3" y2="161.3" stroke="#9A9A9A" stroke-width="0.9"/><circle cx="311.3" cy="146.8" r="4" fill="#fff" stroke="#9A9A9A" stroke-width="0.9"/><path d="M312.4 145.5 A1.75 1.75 0 1 0 313 147.5" fill="none" stroke="#444" stroke-width="0.8"/><path d="M311.9 144.6 L313.8 144.6 L313.8 146.5z" fill="#444"/><rect x="268.6" y="158.4" width="5.8" height="5.8" fill="#fff" stroke="#9A9A9A" stroke-width="0.8"/><rect x="268.6" y="197.95" width="5.8" height="5.8" fill="#fff" stroke="#9A9A9A" stroke-width="0.8"/><rect x="268.6" y="237.5" width="5.8" height="5.8" fill="#fff" stroke="#9A9A9A" stroke-width="0.8"/><rect x="308.40000000000003" y="158.4" width="5.8" height="5.8" fill="#fff" stroke="#9A9A9A" stroke-width="0.8"/><rect x="308.40000000000003" y="237.5" width="5.8" height="5.8" fill="#fff" stroke="#9A9A9A" stroke-width="0.8"/><rect x="348.20000000000005" y="158.4" width="5.8" height="5.8" fill="#fff" stroke="#9A9A9A" stroke-width="0.8"/><rect x="348.20000000000005" y="197.95" width="5.8" height="5.8" fill="#fff" stroke="#9A9A9A" stroke-width="0.8"/><rect x="348.20000000000005" y="237.5" width="5.8" height="5.8" fill="#fff" stroke="#9A9A9A" stroke-width="0.8"/></svg><div style="position:absolute;left:122px;top:393px;width:374px;height:1px;background:#DADADA"></div><div style="position:absolute;left:122px;top:394px;width:374px;height:21px;background:#fff"></div><div class="t" style="left:126.8px;top:396.82px;font-size:8.75px;line-height:17.5px;color:#222;font-weight:400;">Click to add notes</div><div style="position:absolute;left:499px;top:85px;width:201px;height:324.6px;border:4px solid #E8473D;border-right-width:4px;box-sizing:border-box"></div><div style="position:absolute;left:503px;top:89px;width:193px;height:4px;background:rgba(250,250,250,0.55)"></div><div style="position:absolute;left:503px;top:93px;width:193px;height:1px;background:#DCDCDC"></div><div style="position:absolute;left:503px;top:94px;width:193px;height:311.5px;background:#EFEFEF"></div><div style="position:absolute;left:505.4px;top:94px;width:77.2px;height:18.6px;border:2.5px solid #8CC2F7;border-radius:3px;box-sizing:border-box;background:#E6E6E6"></div><div class="t" style="left:508.9px;top:94.87px;font-size:9.9px;line-height:19.8px;color:#111;font-weight:700;">Selection Pane</div><svg style="position:absolute;left:680px;top:94px;overflow:visible" width="20" height="20" viewBox="0 0 20 20"><circle cx="9.7" cy="9" r="4.6" fill="#B8B8B8"/><path d="M7.9 7.2 l3.6 3.6 M11.5 7.2 l-3.6 3.6" stroke="#fff" stroke-width="1.1"/></svg><div style="position:absolute;left:510.7px;top:119.4px;width:51.7px;height:12.9px;background:#fff;border:1px solid #CFCFCF;border-radius:3px;box-sizing:border-box;box-shadow:0 0.5px 0.5px rgba(0,0,0,0.08)"></div><div style="position:absolute;left:571.9px;top:119.4px;width:51.7px;height:12.9px;background:#fff;border:1px solid #CFCFCF;border-radius:3px;box-sizing:border-box;box-shadow:0 0.5px 0.5px rgba(0,0,0,0.08)"></div><div class="t" style="left:336.5px;width:400px;text-align:center;top:117.52px;font-size:8.6px;line-height:17.2px;color:#333;font-weight:400;">Show All</div><div class="t" style="left:397.70000000000005px;width:400px;text-align:center;top:117.52px;font-size:8.6px;line-height:17.2px;color:#333;font-weight:400;">Hide All</div><div style="position:absolute;left:510.3px;top:140.3px;width:175.4px;height:265px;background:#FAFAFA;border:1px solid #DCDCDC;border-bottom:none;box-sizing:border-box"></div><div style="position:absolute;left:511.1px;top:141.1px;width:163.9px;height:12.85px;background:#FFFFFF"></div><div class="t" style="left:524.3px;top:139.15px;font-size:8.8px;line-height:17.6px;color:#111;font-weight:400;">Lightning Bolt 10</div><svg style="position:absolute;left:655px;top:140.8px;overflow:visible" width="20" height="12" viewBox="0 0 20 12"><path d="M3.8 6 q6.9 -7.6 13.6 0 q-6.7 7.6 -13.6 0z" fill="#7A7A7A"/><circle cx="10.6" cy="6" r="2.7" fill="#fff"/><circle cx="10.6" cy="6" r="1.05" fill="#7A7A7A"/></svg><div style="position:absolute;left:511.1px;top:153.95px;width:163.9px;height:12.85px;background:#F3F3F3"></div><div class="t" style="left:524.3px;top:152.00px;font-size:8.8px;line-height:17.6px;color:#111;font-weight:400;">Moon 9</div><svg style="position:absolute;left:655px;top:153.65px;overflow:visible" width="20" height="12" viewBox="0 0 20 12"><path d="M3.8 6 q6.9 -7.6 13.6 0 q-6.7 7.6 -13.6 0z" fill="#7A7A7A"/><circle cx="10.6" cy="6" r="2.7" fill="#fff"/><circle cx="10.6" cy="6" r="1.05" fill="#7A7A7A"/></svg><div style="position:absolute;left:511.1px;top:166.8px;width:163.9px;height:12.85px;background:#FFFFFF"></div><div class="t" style="left:524.3px;top:164.85px;font-size:8.8px;line-height:17.6px;color:#111;font-weight:400;">Cloud 8</div><svg style="position:absolute;left:655px;top:166.5px;overflow:visible" width="20" height="12" viewBox="0 0 20 12"><path d="M3.8 6 q6.9 -7.6 13.6 0 q-6.7 7.6 -13.6 0z" fill="#7A7A7A"/><circle cx="10.6" cy="6" r="2.7" fill="#fff"/><circle cx="10.6" cy="6" r="1.05" fill="#7A7A7A"/></svg><div style="position:absolute;left:511.1px;top:179.65px;width:163.9px;height:12.85px;background:#F3F3F3"></div><div class="t" style="left:524.3px;top:177.70px;font-size:8.8px;line-height:17.6px;color:#111;font-weight:400;">Oval 7</div><svg style="position:absolute;left:655px;top:179.35px;overflow:visible" width="20" height="12" viewBox="0 0 20 12"><path d="M3.8 6 q6.9 -7.6 13.6 0 q-6.7 7.6 -13.6 0z" fill="#7A7A7A"/><circle cx="10.6" cy="6" r="2.7" fill="#fff"/><circle cx="10.6" cy="6" r="1.05" fill="#7A7A7A"/></svg><div style="position:absolute;left:511.1px;top:192.5px;width:163.9px;height:12.85px;background:#D9D9D9"></div><div class="t" style="left:524.3px;top:190.55px;font-size:8.8px;line-height:17.6px;color:#111;font-weight:400;">Diamond 6</div><svg style="position:absolute;left:655px;top:192.2px;overflow:visible" width="20" height="12" viewBox="0 0 20 12"><path d="M3.8 6 q6.9 -7.6 13.6 0 q-6.7 7.6 -13.6 0z" fill="#7A7A7A"/><circle cx="10.6" cy="6" r="2.7" fill="#fff"/><circle cx="10.6" cy="6" r="1.05" fill="#7A7A7A"/></svg><div style="position:absolute;left:511.1px;top:205.35px;width:163.9px;height:12.85px;background:#F3F3F3"></div><div class="t" style="left:524.3px;top:203.40px;font-size:8.8px;line-height:17.6px;color:#111;font-weight:400;">Sun 4</div><svg style="position:absolute;left:655px;top:205.05px;overflow:visible" width="20" height="12" viewBox="0 0 20 12"><path d="M3.8 6 q6.9 -7.6 13.6 0 q-6.7 7.6 -13.6 0z" fill="#7A7A7A"/><circle cx="10.6" cy="6" r="2.7" fill="#fff"/><circle cx="10.6" cy="6" r="1.05" fill="#7A7A7A"/></svg><div style="position:absolute;left:511.1px;top:218.2px;width:163.9px;height:12.85px;background:#FFFFFF"></div><div style="position:absolute;left:511.1px;top:231.05px;width:163.9px;height:12.85px;background:#F3F3F3"></div><div style="position:absolute;left:511.1px;top:243.9px;width:163.9px;height:12.85px;background:#FFFFFF"></div><div style="position:absolute;left:511.1px;top:256.75px;width:163.9px;height:12.85px;background:#F3F3F3"></div><div style="position:absolute;left:511.1px;top:269.6px;width:163.9px;height:12.85px;background:#FFFFFF"></div><div style="position:absolute;left:511.1px;top:282.45px;width:163.9px;height:12.85px;background:#F3F3F3"></div><div style="position:absolute;left:511.1px;top:295.3px;width:163.9px;height:12.85px;background:#FFFFFF"></div><div style="position:absolute;left:511.1px;top:308.15px;width:163.9px;height:12.85px;background:#F3F3F3"></div><div style="position:absolute;left:511.1px;top:321.0px;width:163.9px;height:12.85px;background:#FFFFFF"></div><div style="position:absolute;left:511.1px;top:333.85px;width:163.9px;height:12.85px;background:#F3F3F3"></div><div style="position:absolute;left:511.1px;top:346.7px;width:163.9px;height:12.85px;background:#FFFFFF"></div><div style="position:absolute;left:511.1px;top:359.55px;width:163.9px;height:12.85px;background:#F3F3F3"></div><div style="position:absolute;left:511.1px;top:372.4px;width:163.9px;height:12.85px;background:#FFFFFF"></div><div style="position:absolute;left:511.1px;top:385.25px;width:163.9px;height:12.85px;background:#F3F3F3"></div><div style="position:absolute;left:511.1px;top:398.1px;width:163.9px;height:7.4px;background:#FFFFFF"></div><div style="position:absolute;left:675px;top:141.1px;width:1px;height:264.4px;background:#EDEDED"></div><div style="position:absolute;left:0px;top:415px;width:700px;height:16px;background:linear-gradient(#E2E2E2,#D6D6D6);border-top:1px solid #C9C9C9;box-sizing:border-box"></div><div class="t" style="left:16px;top:414.92px;font-size:8.9px;line-height:17.8px;color:#555;font-weight:400;">Slide 1 of 3</div><div class="t" style="left:74.3px;top:415.19px;font-size:8.7px;line-height:17.4px;color:#555;font-weight:400;">English (United States)</div><div class="t" style="left:364.2px;top:415.02px;font-size:8.9px;line-height:17.8px;color:#555;font-weight:400;">Notes</div><div class="t" style="left:412.8px;top:415.55px;font-size:8.5px;line-height:17.0px;color:#555;font-weight:400;">Comments</div><div class="t" style="left:448.5px;width:400px;text-align:center;top:415.55px;font-size:8.5px;line-height:17.0px;color:#555;font-weight:400;">53%</div><div style="position:absolute;left:462px;top:416px;width:25px;height:15px;background:#ADADAD"></div><svg style="position:absolute;left:0px;top:0px;overflow:visible" width="700" height="431" viewBox="0 0 700 431">
<path d="M353 421.5 l4.5-2.5 l4.5 2.5z" fill="#666"/>
<path d="M353 424 h9 M353 426.5 h9" stroke="#666" stroke-width="0.9"/>
<path d="M401 419.2 h9.5 v6 h-5 l-2.5 2.3 v-2.3 h-2z" fill="#555"/>
<rect x="468.9" y="418.7" width="10" height="9.7" rx="1.2" fill="#F4F4F4"/>
<rect x="472.5" y="420.1" width="5.4" height="6.8" fill="#B9B9B9"/>
<rect x="473.2" y="421.2" width="3.9" height="1.9" fill="#F4F4F4"/>
<g fill="#4E4E4E"><rect x="493.6" y="419.4" width="4.3" height="2.6" rx="0.6"/><rect x="499.8" y="419.4" width="4.3" height="2.6" rx="0.6"/><rect x="493.6" y="424" width="4.3" height="2.6" rx="0.6"/><rect x="499.8" y="424" width="4.3" height="2.6" rx="0.6"/></g>
<rect x="518.5" y="419" width="10" height="5.5" fill="#fff" stroke="#666" stroke-width="0.9"/>
<path d="M523.5 424.5 v3 M521 427.8 h5" stroke="#666" stroke-width="0.9"/>
<path d="M540 422.6 h4.5" stroke="#444" stroke-width="1.2"/>
<rect x="551.5" y="421.8" width="66" height="1.7" rx="0.85" fill="#9A9A9A"/>
<circle cx="584.6" cy="422.65" r="0.8" fill="#DDD"/>
<circle cx="569" cy="422.6" r="3.7" fill="#fff" stroke="#aaa" stroke-width="0.6"/>
<path d="M623 422.6 h5.3 M625.65 420 v5.3" stroke="#444" stroke-width="1.2"/>
<rect x="672.6" y="418.9" width="7.8" height="8.3" fill="none" stroke="#777" stroke-width="0.9"/>
<path d="M674.2 420.5 l1.8 1.8 M678.8 420.5 l-1.8 1.8 M674.2 425.6 l1.8-1.8 M678.8 425.6 l-1.8-1.8" stroke="#777" stroke-width="0.8"/>
</svg>
</body></html>
